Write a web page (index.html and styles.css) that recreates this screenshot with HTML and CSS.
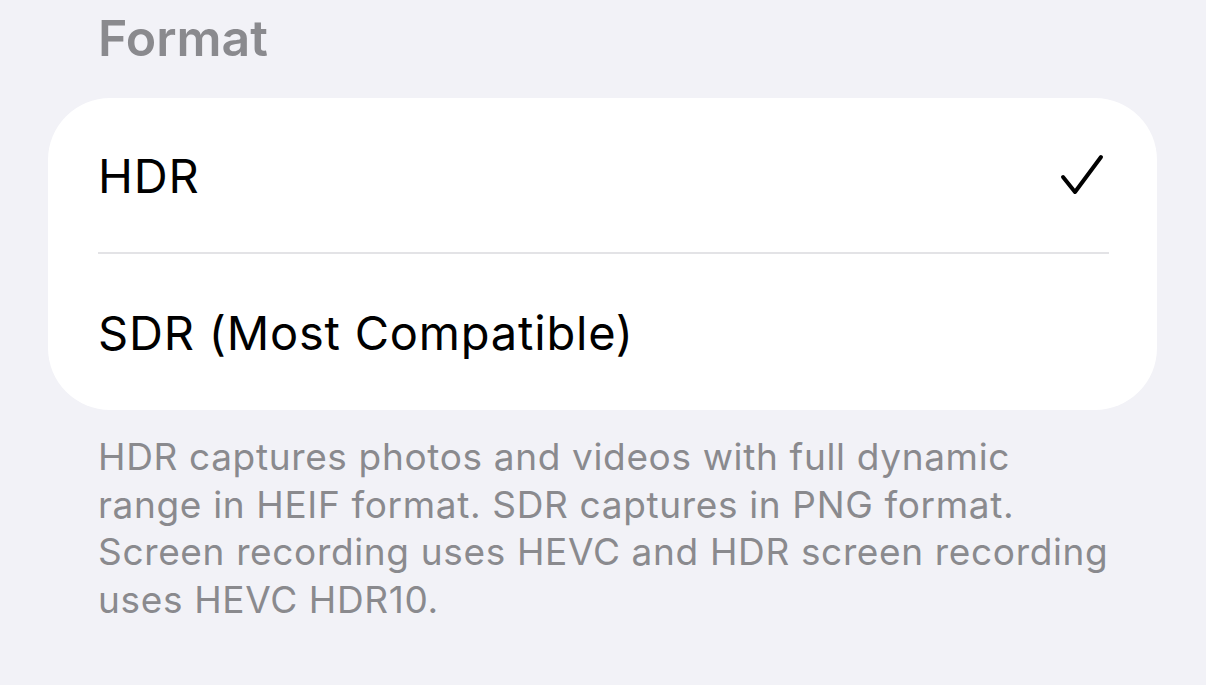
FILE: index.html
```html
<!DOCTYPE html>
<html>
<head>
<meta charset="utf-8">
<link rel="stylesheet" href="styles.css">
</head>
<body>
<div class="page">
  <div class="section-title">Format</div>
  <div class="card">
    <div class="row">
      <span class="label">HDR</span>
      <svg class="check" width="44" height="44" viewBox="0 0 44 44" aria-hidden="true">
        <path d="M3 23 L15 38 L41 3" fill="none" stroke="#000" stroke-width="4" stroke-linecap="round" stroke-linejoin="round"/>
      </svg>
    </div>
    <div class="sep"></div>
    <div class="row">
      <span class="label">SDR (Most Compatible)</span>
    </div>
  </div>
  <p class="footer">HDR captures photos and videos with full dynamic range in HEIF format. SDR captures in PNG format. Screen recording uses HEVC and HDR screen recording uses HEVC HDR10.</p>
</div>
</body>
</html>
```
FILE: styles.css
```css
html, body {
  margin: 0;
  padding: 0;
  background: #f2f2f7;
}
body {
  font-family: Inter, "Noto Sans", sans-serif;
  width: 1206px;
  height: 685px;
  overflow: hidden;
}
.page {
  padding: 0 49px 0 48px;
  display: flex;
  flex-direction: column;
}
.section-title {
  padding: 8px 0 0 50px;
  height: 98px;
  box-sizing: border-box;
  font-size: 50px;
  font-weight: 600;
  color: #8a8a8e;
  line-height: 60px;
}
.card {
  background: #fff;
  border-radius: 62px;
  display: flex;
  flex-direction: column;
  padding: 0 48px 0 50px;
}
.row {
  display: flex;
  align-items: center;
  justify-content: space-between;
  height: 154px;
}
.row:last-child {
  height: 156px;
}
.label {
  font-size: 47px;
  color: #000;
  letter-spacing: 0.8px;
}
.check {
  margin-right: 5px;
  margin-top: 2px;
}
.sep {
  height: 2px;
  background: #e3e3e6;
}
.footer {
  margin: 23px 0 0 50px;
  font-size: 37px;
  line-height: 47.5px;
  color: #8a8a8e;
  letter-spacing: 0.65px;
  max-width: 1016px;
}
```
